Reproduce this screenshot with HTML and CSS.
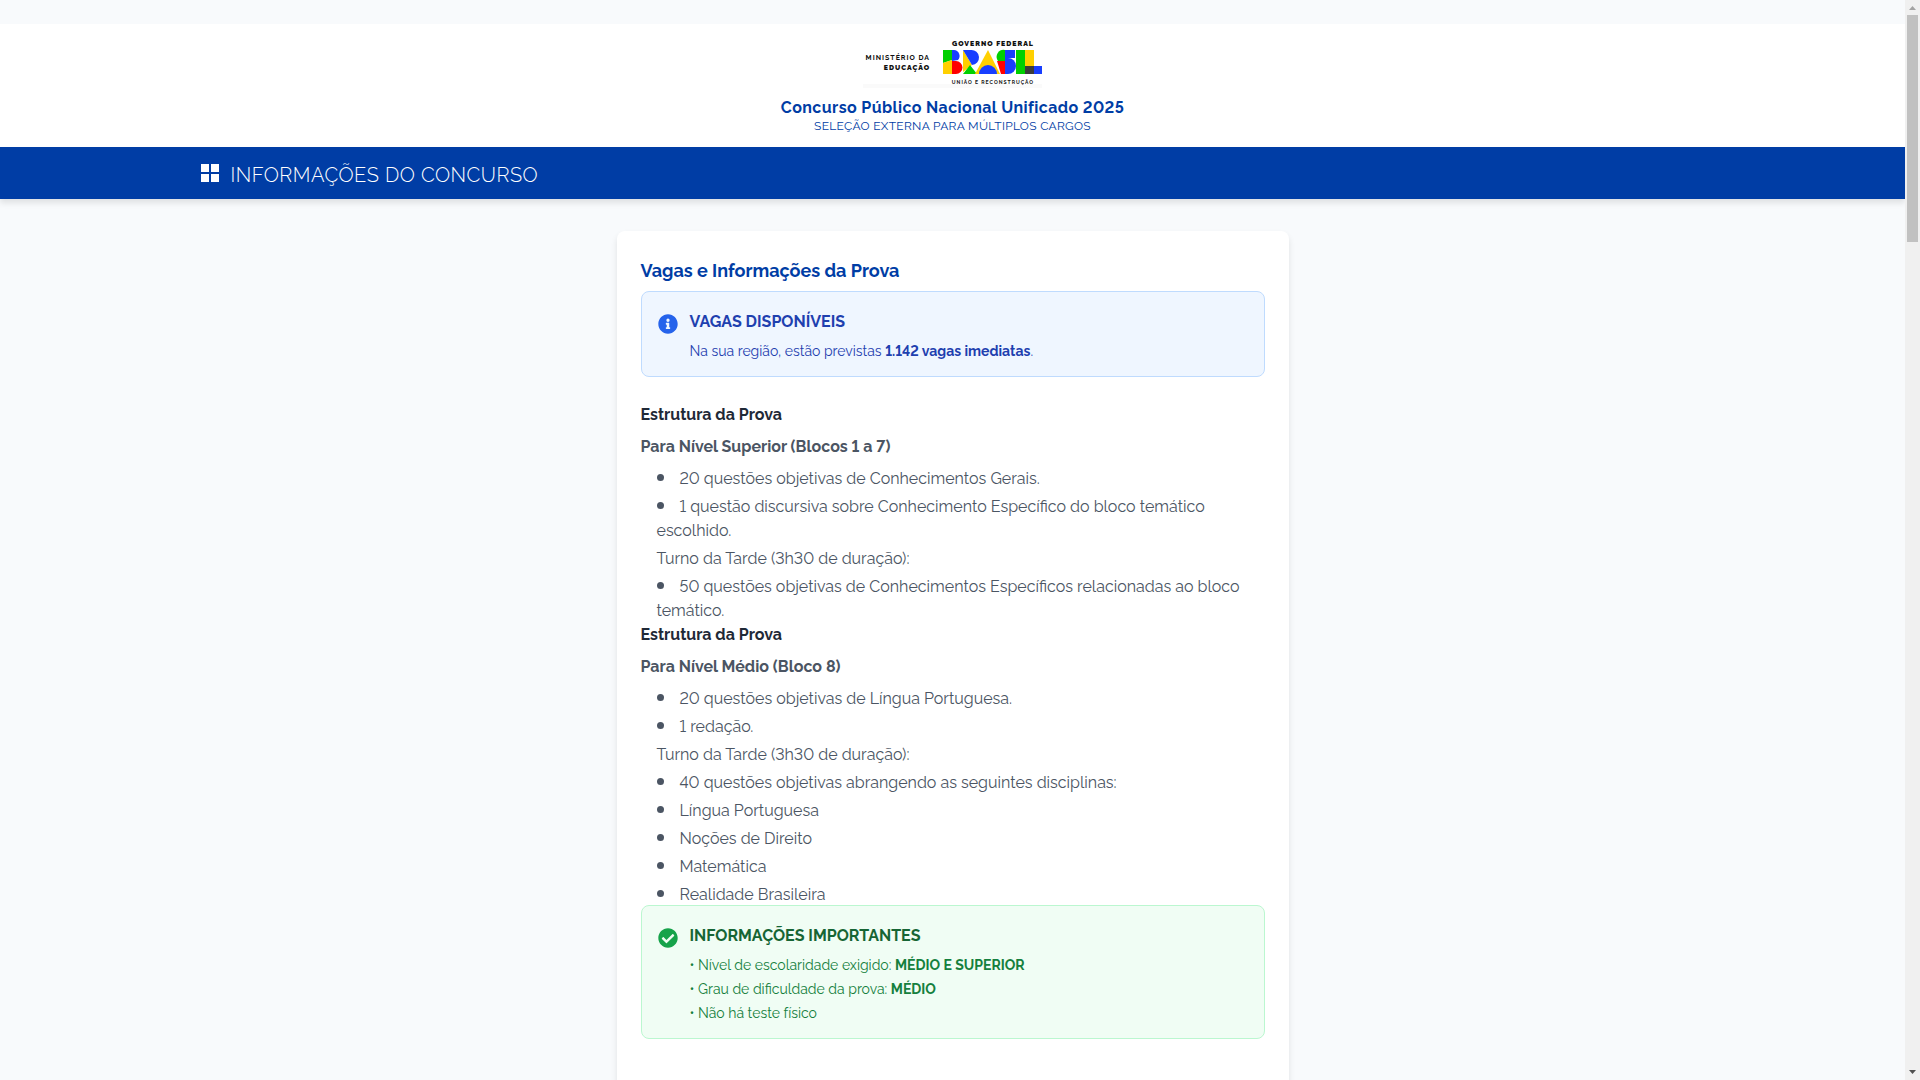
FILE: index.html
```html
<!DOCTYPE html>
<html lang="pt-BR">

<head>
  <meta charset="UTF-8">
  <meta name="viewport" content="width=device-width, initial-scale=1.0">
  <title>Concurso Público Nacional Unificado 2025</title>
  <link rel="stylesheet" href="styles.css">
</head>

<body>
  <div class="page">
    <header class="header">
      <svg class="logo" viewBox="0 0 179 48" role="img" aria-label="Ministério da Educação - Governo Federal">
        <rect y="44" width="179" height="4" fill="#fafafa"/>
        <g class="logo-text" text-anchor="end">
          <text class="logo-ministry" x="67" y="20">MINISTÉRIO DA</text>
          <text class="logo-ministry logo-heavy" x="67" y="30">EDUCAÇÃO</text>
        </g>
        <g class="logo-text" text-anchor="middle">
          <text class="logo-gov logo-heavy" x="130" y="6">GOVERNO FEDERAL</text>
          <text class="logo-slogan" x="130" y="44">UNIÃO E RECONSTRUÇÃO</text>
        </g>
        <!-- B -->
        <path d="M80 10h9v10l-9 3z" fill="#00d000"/>
        <path d="M89 10h2a6 6 0 0 1 4 10l-6 1z" fill="#183eff"/>
        <path d="M80 23l9-3v14h-9z" fill="#ffd000"/>
        <path d="M89 21h4a6.500 6.500 0 0 1 0 13h-4z" fill="#f00"/>
        <!-- R -->
        <path d="M100 10l9 15-9 7z" fill="#ffd000"/>
        <path d="M100 10h8a7.500 7.500 0 0 1 1 15z" fill="#183eff"/>
        <path d="M100 34l7-9 7 9z" fill="#00d000"/>
        <!-- A -->
        <path d="M125 10l12 24h-25z" fill="#ffd000"/>
        <path d="M116 34a9 9 0 0 1 18 0z" fill="#183eff"/>
        <!-- S -->
        <path d="M142 10v11h-7a7 7 0 0 1 7-11z" fill="#00d000"/>
        <path d="M142 10h10v8h-10z" fill="#183eff"/>
        <path d="M134 21h8v13h-4z" fill="#f00"/>
        <path d="M142 18h3a8 8 0 0 1 0 16h-3z" fill="#183eff"/>
        <!-- I, L -->
        <path d="M153 10h9v24h-9z" fill="#00d000"/>
        <path d="M162 10h9v16h-9z" fill="#ffd000"/>
        <path d="M162 26h9v8h-9z" fill="#3c3c3c"/>
        <path d="M171 26h8v8h-8z" fill="#183eff"/>
      </svg>
      <h1 class="header-title">Concurso Público Nacional Unificado 2025</h1>
      <p class="header-subtitle">SELEÇÃO EXTERNA PARA MÚLTIPLOS CARGOS</p>
    </header>

    <nav class="navbar">
      <div class="navbar-inner">
        <svg class="navbar-icon" viewBox="0 0 18 18" aria-hidden="true">
          <path d="M0 0h8v8H0zM10 0h8v8h-8zM0 10h8v8H0zM10 10h8v8h-8z" fill="#fff"/>
        </svg>
        <span class="navbar-title">INFORMAÇÕES DO CONCURSO</span>
      </div>
    </nav>

    <main class="card">
      <h2 class="card-title">Vagas e Informações da Prova</h2>

      <div class="alert alert-info">
        <svg class="alert-icon" viewBox="0 0 512 512" aria-hidden="true">
          <path fill="#2563eb" d="M256 8C119 8 8 119 8 256s111 248 248 248 248-111 248-248S393 8 256 8zm0 110a42 42 0 1 1 0 84 42 42 0 0 1 0-84zm56 254c0 7-5 12-12 12h-88c-7 0-12-5-12-12v-24c0-7 5-12 12-12h12v-64h-12c-7 0-12-5-12-12v-24c0-7 5-12 12-12h64c7 0 12 5 12 12v100h12c7 0 12 5 12 12z"/>
        </svg>
        <div class="alert-body">
          <h3 class="alert-title">VAGAS DISPONÍVEIS</h3>
          <p>Na sua região, estão previstas <strong>1.142 vagas imediatas</strong>.</p>
        </div>
      </div>

      <h3 class="section-title">Estrutura da Prova</h3>
      <h4 class="section-level">Para Nível Superior (Blocos 1 a 7)</h4>
      <ul class="topics">
        <li>20 questões objetivas de Conhecimentos Gerais.</li>
        <li>1 questão discursiva sobre Conhecimento Específico do bloco temático escolhido.</li>
        <li class="shift">Turno da Tarde (3h30 de duração):</li>
        <li>50 questões objetivas de Conhecimentos Específicos relacionadas ao bloco temático.</li>
      </ul>

      <h3 class="section-title">Estrutura da Prova</h3>
      <h4 class="section-level">Para Nível Médio (Bloco 8)</h4>
      <ul class="topics">
        <li>20 questões objetivas de Língua Portuguesa.</li>
        <li>1 redação.</li>
        <li class="shift">Turno da Tarde (3h30 de duração):</li>
        <li>40 questões objetivas abrangendo as seguintes disciplinas:</li>
        <li>Língua Portuguesa</li>
        <li>Noções de Direito</li>
        <li>Matemática</li>
        <li>Realidade Brasileira</li>
      </ul>

      <div class="alert alert-success">
        <svg class="alert-icon" viewBox="0 0 512 512" aria-hidden="true">
          <path fill="#16a34a" d="M504 256c0 137-111 248-248 248S8 393 8 256 119 8 256 8s248 111 248 248zM227 387l184-184c6-6 6-16 0-22l-22-23c-7-6-17-6-23 0L216 308l-70-70c-6-6-16-6-23 0l-22 23c-6 6-6 16 0 22l104 104c6 7 16 7 22 0z"/>
        </svg>
        <div class="alert-body">
          <h3 class="alert-title">INFORMAÇÕES IMPORTANTES</h3>
          <p>• Nível de escolaridade exigido: <strong>MÉDIO E SUPERIOR</strong></p>
          <p>• Grau de dificuldade da prova: <strong>MÉDIO</strong></p>
          <p>• Não há teste físico</p>
        </div>
      </div>
    </main>
  </div>

  <div class="scrollbar" aria-hidden="true">
    <svg class="scrollbar-arrow" viewBox="0 0 15 15">
      <path d="M4 10l3.500-4 3.500 4z" fill="#a3a3a3"/>
    </svg>
    <div class="scrollbar-track">
      <div class="scrollbar-thumb"></div>
    </div>
    <svg class="scrollbar-arrow" viewBox="0 0 15 15">
      <path d="M4 5h7l-3.500 4z" fill="#505050"/>
    </svg>
  </div>
</body>

</html>
```
FILE: styles.css
```css
* {
  box-sizing: border-box;
  margin: 0;
  padding: 0;
}

body {
  display: flex;
  height: 100vh;
  font-family: Raleway, "Open Sans", sans-serif;
  font-size: 16px;
  line-height: 24px;
  font-variant-numeric: lining-nums;
  color: #4b5563;
  background-color: #f8fafc;
}

.page {
  flex: 1;
  min-width: 0;
  padding-top: 24px;
  overflow-y: auto;
  scrollbar-width: none;
}

.header {
  display: flex;
  flex-direction: column;
  align-items: center;
  padding: 16px 16px 15px;
  text-align: center;
  color: #003da5;
  background-color: #fff;
}

.logo {
  width: 179px;
  height: 48px;
  margin-bottom: 8px;
  overflow: visible;
}

.logo-text {
  font-family: Raleway, Lato, sans-serif;
  font-weight: 700;
  letter-spacing: 1px;
  fill: #111;
}

.logo-ministry,
.logo-gov {
  font-size: 7px;
}

.logo-slogan {
  font-size: 5px;
}

.logo-heavy {
  font-weight: 900;
}

.header-title {
  font-size: 16px;
  line-height: 24px;
  font-weight: 700;
  letter-spacing: 0.025em;
}

.header-subtitle {
  font-size: 12px;
  line-height: 12px;
  letter-spacing: 0.025em;
}

.navbar {
  color: #fff;
  background-color: #003da5;
  box-shadow: 0 4px 6px rgba(0, 0, 0, 0.1);
}

.navbar-inner {
  display: flex;
  align-items: flex-start;
  gap: 12px;
  max-width: 1536px;
  margin: 0 auto;
  padding: 14px 16px 10px;
}

.navbar-icon {
  width: 18px;
  height: 18px;
  margin-top: 3px;
}

.navbar-title {
  font-size: 20px;
  line-height: 28px;
  font-weight: 300;
  letter-spacing: 0.025em;
}

.card {
  max-width: 672px;
  min-height: 100vh;
  margin: 32px auto;
  padding: 26px 24px 24px;
  background-color: #fff;
  border-radius: 8px;
  box-shadow: 0 4px 6px rgba(0, 0, 0, 0.1);
}

.card-title {
  margin-bottom: 6px;
  font-size: 18px;
  line-height: 28px;
  font-weight: 700;
  color: #003da5;
}

.alert {
  display: flex;
  gap: 12px;
  margin-bottom: 26px;
  padding: 18px 16px 15px;
  font-size: 14px;
  line-height: 20px;
  border: 1px solid;
  border-radius: 8px;
}

.alert-info {
  color: #1e40af;
  background-color: #eff6ff;
  border-color: #bfdbfe;
}

.alert-success {
  color: #15803d;
  background-color: #f0fdf4;
  border-color: #bbf7d0;
}

.alert-icon {
  flex-shrink: 0;
  width: 20px;
  height: 20px;
  margin-top: 4px;
}

.alert-title {
  margin-bottom: 7px;
  font-size: 16px;
  line-height: 24px;
  font-weight: 700;
}

.alert-success .alert-title {
  color: #166534;
}

.alert-body p + p {
  margin-top: 4px;
}

.section-title {
  margin-bottom: 8px;
  font-size: 16px;
  font-weight: 700;
  color: #1f2937;
}

.section-level {
  margin-bottom: 8px;
  font-size: 16px;
  font-weight: 700;
}

.topics {
  margin-left: 16px;
  list-style: none;
}

.topics li::before {
  content: "";
  display: inline-block;
  width: 7px;
  height: 7px;
  margin-right: 16px;
  vertical-align: 3px;
  border-radius: 50%;
  background-color: #4b5563;
}

.topics li + li {
  margin-top: 4px;
}

.topics .shift::before {
  display: none;
}

.topics + .alert {
  margin-top: -2px;
}

.scrollbar {
  display: flex;
  flex-direction: column;
  width: 15px;
  background-color: #f0f0f0;
}

.scrollbar-arrow {
  width: 15px;
  height: 15px;
}

.scrollbar-track {
  flex: 1;
  padding: 0 2px;
}

.scrollbar-thumb {
  height: 227px;
  background-color: #c1c1c1;
}
```
